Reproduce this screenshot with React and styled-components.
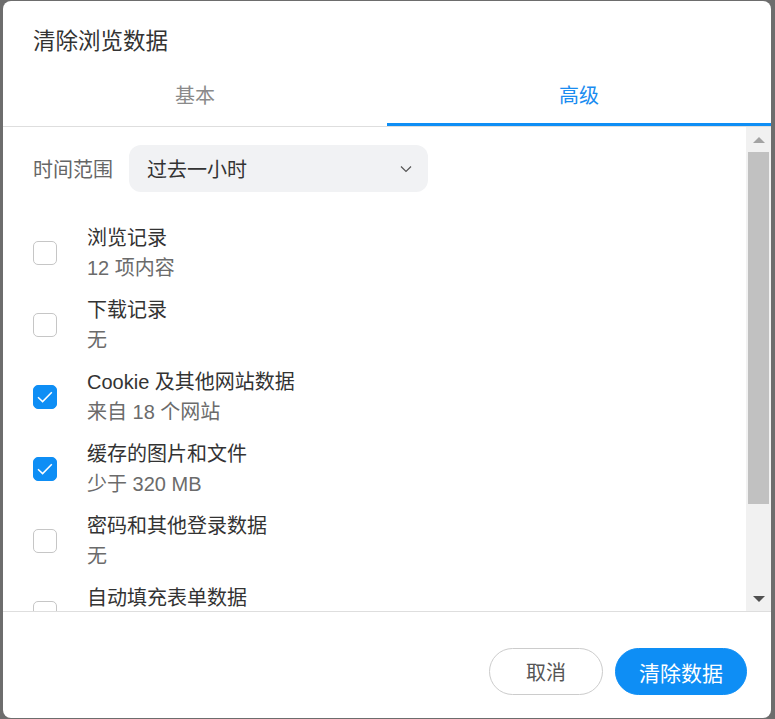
import styled, { createGlobalStyle } from 'styled-components';

const GlobalStyle = createGlobalStyle`
  html, body {
    margin: 0;
    padding: 0;
    height: 719px;
    overflow: hidden;
    background: #6d6d6d;
  }

  * {
    box-sizing: border-box;
  }
`;

const items = [
  { title: '浏览记录', sub: '12 项内容', checked: false },
  { title: '下载记录', sub: '无', checked: false },
  { title: 'Cookie 及其他网站数据', sub: '来自 18 个网站', checked: true },
  { title: '缓存的图片和文件', sub: '少于 320 MB', checked: true },
  { title: '密码和其他登录数据', sub: '无', checked: false },
  { title: '自动填充表单数据', sub: '无', checked: false },
];

const App = () => {
  return (
    <>
      <GlobalStyle />
      <Dialog>
        <Title>清除浏览数据</Title>
        <TabBar>
          <Tab>基本</Tab>
          <Tab $active>高级</Tab>
        </TabBar>
        <Body>
          <List>
            <RangeRow>
              <RangeLabel>时间范围</RangeLabel>
              <Select>
                <span>过去一小时</span>
                <svg width="12" height="8" viewBox="0 0 12 8">
                  <path d="M1 1.5 L6 6.5 L11 1.5" fill="none" stroke="#555" strokeWidth="1.2" />
                </svg>
              </Select>
            </RangeRow>
            {items.map((item) => (
              <Row key={item.title}>
                <Checkbox $checked={item.checked}>
                  {item.checked && (
                    <svg width="22" height="22" viewBox="0 0 22 22">
                      <path d="M4 11.2 L8.6 15.6 L17.8 6.2" fill="none" stroke="#fff" strokeWidth="1.5" />
                    </svg>
                  )}
                </Checkbox>
                <RowText>
                  <RowTitle>{item.title}</RowTitle>
                  <RowSub>{item.sub}</RowSub>
                </RowText>
              </Row>
            ))}
          </List>
          <Scrollbar>
            <ScrollButton>
              <Arrow $dir="up" />
            </ScrollButton>
            <Track>
              <Thumb />
            </Track>
            <ScrollButton>
              <Arrow $dir="down" />
            </ScrollButton>
          </Scrollbar>
        </Body>
        <Footer>
          <Button>取消</Button>
          <Button $primary>清除数据</Button>
        </Footer>
      </Dialog>
    </>
  );
};

const Dialog = styled.div`
  width: 768px;
  height: 717px;
  margin: 1px 0 0 3px;
  background: #ffffff;
  border-radius: 8px;
  display: flex;
  flex-direction: column;
  overflow: hidden;
  font-family: "Liberation Sans", "Noto Sans CJK SC", sans-serif;
`;

const Title = styled.h1`
  margin: 0;
  padding: 27px 30px 0 30px;
  font-size: 22.5px;
  line-height: 28px;
  font-weight: normal;
  color: #333333;
`;

const TabBar = styled.div`
  display: flex;
  margin-top: 14px;
  border-bottom: 1px solid #dedede;
`;

const Tab = styled.div`
  flex: 1;
  height: 56px;
  padding-top: 12px;
  text-align: center;
  font-size: 20px;
  line-height: 28px;
  color: ${(p) => (p.$active ? '#1a8cf0' : '#8a8a8a')};
  border-bottom: 3px solid ${(p) => (p.$active ? '#0e8ef5' : 'transparent')};
`;

const Body = styled.div`
  flex: 1;
  display: flex;
  min-height: 0;
`;

const List = styled.div`
  flex: 1;
  overflow: hidden;
  padding: 18px 0 0 30px;
  display: flex;
  flex-direction: column;
  gap: 12px;
`;

const RangeRow = styled.div`
  display: flex;
  align-items: center;
  gap: 16px;
  margin-bottom: 19px;
  flex-shrink: 0;
`;

const RangeLabel = styled.span`
  font-size: 20px;
  color: #666666;
`;

const Select = styled.div`
  width: 299px;
  height: 47px;
  border-radius: 12px;
  background: #f1f2f4;
  display: flex;
  align-items: center;
  justify-content: space-between;
  padding: 0 16px 0 18px;
  font-size: 20px;
  color: #333333;
`;

const Row = styled.div`
  display: flex;
  align-items: center;
  flex-shrink: 0;
`;

const Checkbox = styled.div`
  width: 24px;
  height: 24px;
  border-radius: 5px;
  border: 1px solid ${(p) => (p.$checked ? '#0e8ef5' : '#c6c6c6')};
  background: ${(p) => (p.$checked ? '#0e8ef5' : '#ffffff')};
  display: flex;
  align-items: center;
  justify-content: center;
  flex-shrink: 0;

  svg {
    flex-shrink: 0;
  }
`;

const RowText = styled.div`
  margin-left: 30px;
  display: flex;
  flex-direction: column;
`;

const RowTitle = styled.span`
  font-size: 20px;
  line-height: 30px;
  color: #333333;
`;

const RowSub = styled.span`
  font-size: 20px;
  line-height: 30px;
  color: #6b6b6b;
`;

const Scrollbar = styled.div`
  width: 25px;
  background: #f1f1f1;
  display: flex;
  flex-direction: column;
`;

const ScrollButton = styled.div`
  height: 25px;
  display: flex;
  align-items: center;
  justify-content: center;
`;

const Arrow = styled.div`
  width: 0;
  height: 0;
  border-left: 6px solid transparent;
  border-right: 6px solid transparent;
  ${(p) =>
    p.$dir === 'up'
      ? 'border-bottom: 6px solid #a3a3a3;'
      : 'border-top: 6px solid #505050;'}
`;

const Track = styled.div`
  flex: 1;
  padding: 0 2px;
`;

const Thumb = styled.div`
  height: 352px;
  background: #c1c1c1;
`;

const Footer = styled.div`
  border-top: 1px solid #dedede;
  display: flex;
  justify-content: flex-end;
  gap: 12px;
  padding: 36px 24px 23px 24px;
`;

const Button = styled.button`
  height: 47px;
  width: ${(p) => (p.$primary ? '132px' : '114px')};
  border-radius: 24px;
  border: 1px solid ${(p) => (p.$primary ? '#0e8ef5' : '#cccccc')};
  background: ${(p) => (p.$primary ? '#0e8ef5' : '#ffffff')};
  color: ${(p) => (p.$primary ? '#ffffff' : '#555555')};
  font-family: inherit;
  font-size: ${(p) => (p.$primary ? '21px' : '20px')};
  padding: 0;
  cursor: pointer;
`;

export default App;
